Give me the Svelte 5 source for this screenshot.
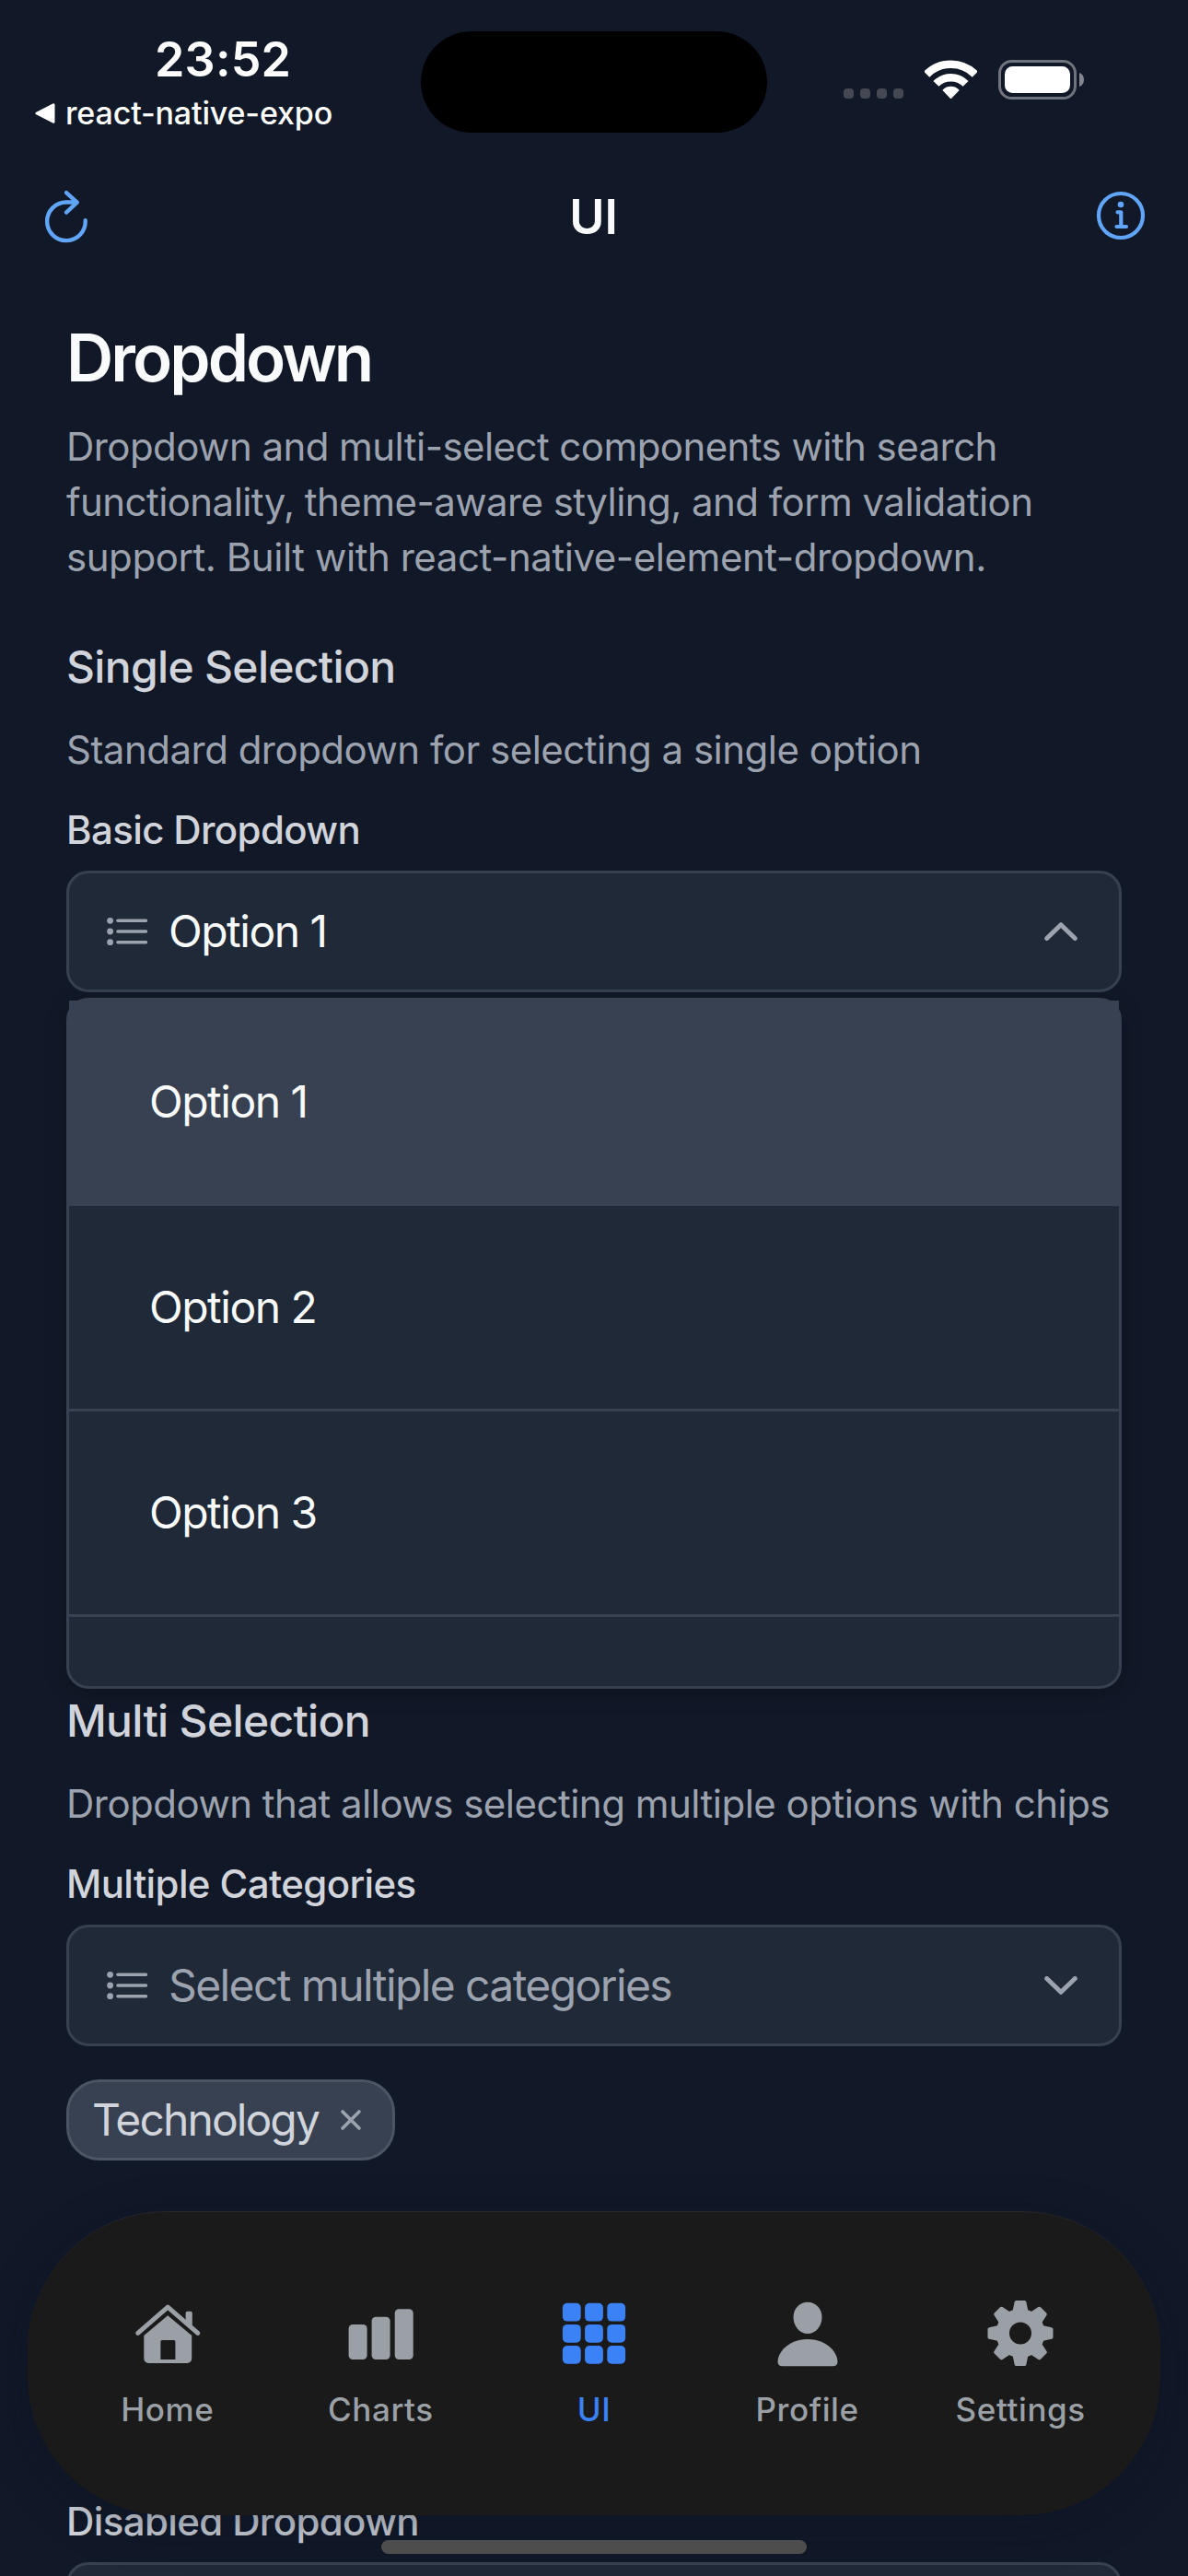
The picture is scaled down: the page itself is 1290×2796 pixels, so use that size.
<script>
  const options = ['Option 1', 'Option 2', 'Option 3'];
  const selected = 'Option 1';
  const tabs = ['Home', 'Charts', 'UI', 'Profile', 'Settings'];
  const activeTab = 'UI';
  const teeth = [0, 45, 90, 135, 180, 225, 270, 315];
  const cells = [0, 1, 2];
</script>

{#snippet listIcon()}
  <svg class="list-icon" viewBox="0 0 44 32" width="44" height="32">
    {#each [4.3, 16, 27.7] as y}
      <circle cx="3.6" cy={y} r="3.4" fill="#9ca3af" />
      <path d="M12 {y}H42.4" stroke="#9ca3af" stroke-width="3.6" stroke-linecap="round" />
    {/each}
  </svg>
{/snippet}

{#snippet tabIcon(name)}
  <svg viewBox="0 0 80 80" width="80" height="80" fill="currentColor">
    {#if name === 'Home'}
      <path d="M7.7 39.3 40.2 11.2 72.8 39.3" fill="none" stroke="currentColor" stroke-width="5" stroke-linecap="round" stroke-linejoin="round" />
      <path d="M59.6 30V17.7a2 2 0 0 1 2-2h3.2a2 2 0 0 1 2 2V36z" />
      <path fill-rule="evenodd" d="M40.2 20.3 66.2 42V67a5 5 0 0 1-5 5H19.3a5 5 0 0 1-5-5V42zM34 47a1.6 1.6 0 0 0-1.6 1.6V68H48.4V48.6A1.6 1.6 0 0 0 46.8 47z" />
    {:else if name === 'Charts'}
      <rect x="5.6" y="30" width="20" height="38" rx="4.5" />
      <rect x="30.6" y="21.8" width="20" height="46.2" rx="4.5" />
      <rect x="55.7" y="13.3" width="20" height="54.7" rx="4.5" />
    {:else if name === 'UI'}
      {#each cells as row}
        {#each cells as col}
          <rect x={5.9 + col * 24.2} y={6.8 + row * 23.1} width="19.8" height="19.8" rx="5" />
        {/each}
      {/each}
    {:else if name === 'Profile'}
      <path d="M40 5.7c8.700 0 15.500 7 15.500 16.300C55.500 32 48.700 40 40 40S24.500 32 24.500 22C24.500 12.700 31.300 5.700 40 5.700z" />
      <path d="M40 46c20 0 32.500 13.500 32.500 24.500 0 3.200-1.800 4.800-5 4.800h-55c-3.200 0-5-1.600-5-4.800C7.500 59.500 20 46 40 46z" />
    {:else}
      <circle cx="40" cy="39.500" r="19.200" fill="none" stroke="currentColor" stroke-width="14.400" />
      {#each teeth as angle}
        <path transform="rotate({angle} 40 39.500)" d="M35.600 6h8.800l2.600 12.500h-14z" stroke="currentColor" stroke-width="4" stroke-linejoin="round" />
      {/each}
    {/if}
  </svg>
{/snippet}

<div class="screen">
  <div class="status">
    <div class="status-left">
      <div class="time">23:52</div>
      <div class="back">
        <svg viewBox="0 0 22 22" width="22" height="22"><path d="M2 11 20 1.800V20.200z" fill="#fff" stroke="#fff" stroke-width="3" stroke-linejoin="round" /></svg>
        <span>react-native-expo</span>
      </div>
    </div>
    <div class="island"></div>
    <div class="status-right">
      <div class="dots"><i></i><i></i><i></i><i></i></div>
      <svg class="wifi" viewBox="0 0 57 42" width="57" height="42" fill="none" stroke="#fff">
        <path d="M2.200 15.700a37.200 37.200 0 0 1 52.600 0" stroke-width="8.600" />
        <path d="M12.400 25.900a22.800 22.800 0 0 1 32.200 0" stroke-width="8.400" />
        <path d="M28.500 41 20.600 32.900a11.500 11.500 0 0 1 15.800 0z" fill="#fff" stroke-width="2" stroke-linejoin="round" />
      </svg>
      <svg class="battery" viewBox="0 0 94 43" width="94" height="43">
        <rect x="1.500" y="1.500" width="82" height="40" rx="13" fill="none" stroke="#70747d" stroke-width="3" />
        <rect x="7" y="7" width="71" height="29" rx="8.500" fill="#fff" />
        <path d="M88 14c3.200 1 5 4 5 7.500s-1.800 6.500-5 7.500z" fill="#84878f" />
      </svg>
    </div>
  </div>

  <header>
    <svg viewBox="0 0 60 60" width="60" height="60" fill="none" stroke="#60a5fa" stroke-width="4.400" stroke-linecap="round" stroke-linejoin="round">
      <path d="M50.700 35.300A20.800 20.800 0 1 1 30 15.500H41" />
      <path d="M30 5.200 41.700 15.700 30 26.600" />
    </svg>
    <div class="title">UI</div>
    <svg viewBox="0 0 60 60" width="60" height="60" fill="none" stroke="#60a5fa" stroke-width="4.200" stroke-linecap="round" stroke-linejoin="round">
      <circle cx="30" cy="30" r="24" />
      <path d="M26.500 26.300H30.300V42M25.500 42H36" />
      <circle cx="30" cy="18" r="3.300" fill="#60a5fa" stroke="none" />
    </svg>
  </header>

  <main>
    <h1>Dropdown</h1>
    <p class="intro">
      <span class="l1">Dropdown and multi-select components with search</span><br />
      <span class="l2">functionality, theme-aware styling, and form validation</span><br />
      <span class="l3">support. Built with react-native-element-dropdown.</span>
    </p>

    <section class="single">
      <h2>Single Selection</h2>
      <p class="sub">Standard dropdown for selecting a single option</p>
      <div class="label">Basic Dropdown</div>
      <div class="field">
        {@render listIcon()}
        <span class="value">{selected}</span>
        <svg viewBox="0 0 36 20" width="36" height="20" fill="none" stroke="#9ca3af" stroke-width="5" stroke-linecap="round" stroke-linejoin="round"><path d="M2.700 17.500 18 2.700 33.300 17.500" /></svg>
        <div class="menu">
          {#each options as option}
            <div class="item" class:chosen={option === selected}>{option}</div>
          {/each}
        </div>
      </div>
    </section>

    <section class="multi">
      <h2>Multi Selection</h2>
      <p class="sub">Dropdown that allows selecting multiple options with chips</p>
      <div class="label">Multiple Categories</div>
      <div class="field">
        {@render listIcon()}
        <span class="value placeholder">Select multiple categories</span>
        <svg viewBox="0 0 36 20" width="36" height="20" fill="none" stroke="#9ca3af" stroke-width="5" stroke-linecap="round" stroke-linejoin="round"><path d="M2.700 2.500 18 17.300 33.300 2.500" /></svg>
      </div>
      <div class="chip">
        <span>Technology</span>
        <svg viewBox="0 0 24 24" width="24" height="24" stroke="#9ca3af" stroke-width="3.600" stroke-linecap="round"><path d="M3 3 21 21M21 3 3 21" /></svg>
      </div>
    </section>

    <section class="disabled">
      <div class="label">Disabled Dropdown</div>
      <div class="field"></div>
    </section>
  </main>

  <nav>
    {#each tabs as tab}
      <div class="tab" class:active={tab === activeTab}>
        {@render tabIcon(tab)}
        <span>{tab}</span>
      </div>
    {/each}
  </nav>
  <div class="home-indicator"></div>
</div>

<style>
  :global(body) {
    margin: 0;
    background: #111827;
  }
  .screen {
    position: relative;
    width: 1290px;
    height: 2796px;
    overflow: hidden;
    background: #111827;
    font-family: Inter, 'Liberation Sans', sans-serif;
    color: #f9fafb;
  }
  svg {
    display: block;
    flex: none;
  }
  .status {
    display: grid;
    grid-template-columns: 457px 376px 457px;
    height: 180px;
    color: #fff;
  }
  .time {
    margin-top: 34px;
    padding-left: 168px;
    font-size: 52px;
    line-height: 62px;
    font-weight: 600;
    letter-spacing: 0.2px;
    white-space: nowrap;
  }
  .back {
    display: flex;
    align-items: center;
    gap: 11px;
    margin-top: 6px;
    padding-left: 38px;
    font-size: 34px;
    line-height: 42px;
    font-weight: 500;
    letter-spacing: -0.15px;
    white-space: nowrap;
  }
  .island {
    margin-top: 34px;
    height: 110px;
    border-radius: 55px;
    background: #000;
  }
  .status-right {
    display: flex;
    align-items: flex-start;
    padding: 65px 0 0 83px;
  }
  .dots {
    display: flex;
    gap: 7px;
    margin-top: 31px;
  }
  .dots i {
    width: 11px;
    height: 11px;
    border-radius: 4px;
    background: #454853;
  }
  .wifi {
    margin-left: 23px;
  }
  .battery {
    margin-left: 23px;
  }
  header {
    display: flex;
    justify-content: space-between;
    align-items: center;
    height: 108px;
    padding: 0 43px 0 42px;
  }
  .title {
    padding-top: 3px;
    font-size: 52px;
    line-height: 62px;
    font-weight: 600;
  }
  main {
    padding: 58px 72px 0;
  }
  h1,
  h2,
  p {
    margin: 0;
    white-space: nowrap;
  }
  h1 {
    font-size: 71px;
    line-height: 84px;
    font-weight: 600;
    letter-spacing: -2.95px;
  }
  .intro {
    margin-top: 25px;
    color: #9ca3af;
    font-size: 42px;
    line-height: 60px;
  }
  .l1,
  .l2 {
    letter-spacing: -0.56px;
  }
  .l3 {
    letter-spacing: -0.44px;
  }
  .single {
    margin-top: 59px;
  }
  h2 {
    color: #d1d5db;
    font-size: 48px;
    line-height: 60px;
    font-weight: 500;
    letter-spacing: -0.68px;
  }
  .sub {
    margin-top: 30px;
    color: #9ca3af;
    font-size: 42px;
    line-height: 60px;
    letter-spacing: -0.51px;
  }
  .label {
    color: #d1d5db;
    font-size: 42px;
    line-height: 60px;
    font-weight: 500;
    letter-spacing: -0.62px;
    white-space: nowrap;
  }
  .sub + .label {
    margin-top: 27px;
  }
  .field {
    position: relative;
    display: flex;
    align-items: center;
    box-sizing: border-box;
    height: 132px;
    margin-top: 14px;
    padding: 0 45px 0 41px;
    border: 3px solid #374151;
    border-radius: 24px;
    background: #1f2937;
  }
  .value {
    flex: 1;
    margin-left: 23px;
    font-size: 48px;
    line-height: 60px;
    letter-spacing: -1.5px;
    white-space: nowrap;
  }
  .placeholder {
    color: #9ca3af;
    letter-spacing: -1.6px;
  }
  .menu {
    position: absolute;
    z-index: 1;
    top: 135px;
    left: -3px;
    right: -3px;
    box-sizing: border-box;
    height: 750px;
    border: 3px solid #374151;
    border-radius: 24px;
    background: #1f2937;
    box-shadow: 0 3px 24px rgba(0, 0, 0, 0.2);
  }
  .item {
    display: flex;
    align-items: center;
    box-sizing: border-box;
    height: 223px;
    padding-left: 87px;
    border-bottom: 3px solid #374151;
    font-size: 48px;
    line-height: 60px;
    letter-spacing: -1.5px;
  }
  .chosen {
    background: #374151;
  }
  .multi {
    margin-top: 761px;
  }
  .chip {
    display: flex;
    align-items: center;
    box-sizing: border-box;
    width: 357px;
    height: 88px;
    margin-top: 36px;
    padding: 0 33px 0 25px;
    justify-content: space-between;
    border: 3px solid #4b5563;
    border-radius: 36px;
    background: #374151;
    color: #d1d5db;
    font-size: 48px;
    line-height: 60px;
    letter-spacing: -1.9px;
  }
  .disabled {
    margin-top: 362px;
  }
  nav {
    position: absolute;
    z-index: 2;
    left: 30px;
    top: 2400px;
    display: flex;
    box-sizing: border-box;
    width: 1230px;
    height: 330px;
    padding: 92px 36px 0;
    border-top: 1px solid #29272d;
    border-radius: 150px;
    background: #1a1a1a;
    box-shadow: 0 12px 48px rgba(10, 20, 40, 0.4);
  }
  .tab {
    flex: 1;
    display: flex;
    flex-direction: column;
    align-items: center;
    gap: 21px;
    color: #9aa0a6;
    font-size: 35px;
    line-height: 42px;
    font-weight: 500;
    letter-spacing: 0.6px;
  }
  .active {
    color: #3b82f6;
  }
  .home-indicator {
    position: absolute;
    z-index: 3;
    left: 414px;
    top: 2757px;
    width: 462px;
    height: 15px;
    border-radius: 8px;
    background: #4d4d4d;
  }
</style>
